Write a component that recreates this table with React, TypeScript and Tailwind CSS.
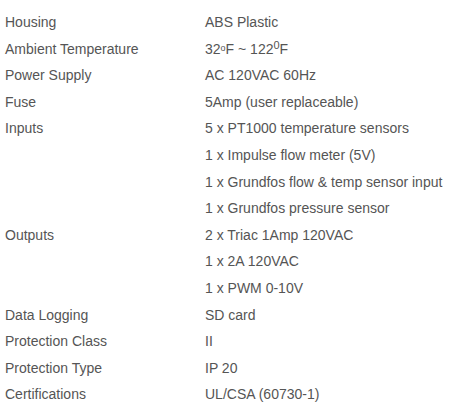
const specs: [string, React.ReactNode][] = [
  ['Housing', 'ABS Plastic'],
  [
    'Ambient Temperature',
    <>
      32<sup className="text-[9px] relative -top-[3px] align-baseline">o</sup>F ~ 122<sup className="text-[11px] relative -top-[5px] align-baseline">0</sup>F
    </>,
  ],
  ['Power Supply', 'AC 120VAC 60Hz'],
  ['Fuse', '5Amp (user replaceable)'],
  ['Inputs', '5 x PT1000 temperature sensors'],
  ['', '1 x Impulse flow meter (5V)'],
  ['', '1 x Grundfos flow & temp sensor input'],
  ['', '1 x Grundfos pressure sensor'],
  ['Outputs', '2 x Triac 1Amp 120VAC'],
  ['', '1 x 2A 120VAC'],
  ['', '1 x PWM 0-10V'],
  ['Data Logging', 'SD card'],
  ['Protection Class', 'II'],
  ['Protection Type', 'IP 20'],
  ['Certifications', 'UL/CSA (60730-1)'],
];

export default function App() {
  return (
    <div className="w-[454px] h-[414px] bg-white pt-[9px] pl-[5px] text-[14px] leading-[26.6px] text-[#555555] font-['Liberation_Sans',Arial,sans-serif]">
      {specs.map(([label, value], i) => (
        <div key={i} className="flex h-[26.6px]">
          <div className="w-[200px] shrink-0">{label}</div>
          <div className="whitespace-nowrap">{value}</div>
        </div>
      ))}
    </div>
  );
}
